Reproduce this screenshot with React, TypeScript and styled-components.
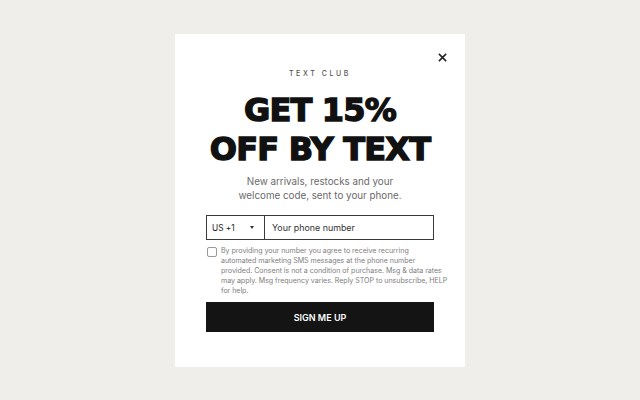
import styled, { createGlobalStyle } from 'styled-components'

const GlobalStyle = createGlobalStyle`
  html, body {
    margin: 0;
    padding: 0;
    background: #efeeea;
  }
  * {
    box-sizing: border-box;
  }
`

const Page = styled.div`
  width: 640px;
  height: 400px;
  display: flex;
  justify-content: center;
  padding-top: 34px;
  font-family: Inter, 'Liberation Sans', sans-serif;
`

const Modal = styled.div`
  position: relative;
  width: 290px;
  height: 333px;
  background: #ffffff;
  padding: 35px 31px 0;
  display: flex;
  flex-direction: column;
  align-items: center;
`

const Close = styled.button`
  position: absolute;
  top: 18px;
  right: 18px;
  width: 10px;
  height: 10px;
  padding: 0;
  border: 0;
  background: none;
  display: flex;
  align-items: center;
  justify-content: center;
  cursor: pointer;
`

const Eyebrow = styled.div`
  font-size: 7px;
  letter-spacing: 2.6px;
  color: #555;
  font-weight: 500;
  margin-left: 0;
`

const Heading = styled.h1`
  margin: 13px 0 0;
  font-family: 'DejaVu Sans', sans-serif;
  font-weight: 900;
  font-size: 32px;
  line-height: 39px;
  letter-spacing: -0.8px;
  color: #111;
  text-align: center;
  -webkit-text-stroke: 1.4px #111;
`

const Subtitle = styled.p`
  margin: 6px 0 0;
  font-size: 9.8px;
  line-height: 14px;
  color: #6a6a6a;
  text-align: center;
`

const PhoneRow = styled.div`
  margin-top: 12px;
  width: 100%;
  height: 25px;
  display: flex;
  border: 1px solid #3a3a3a;
`

const Country = styled.div`
  flex: none;
  width: 58px;
  border-right: 1px solid #3a3a3a;
  display: flex;
  align-items: center;
  justify-content: space-between;
  padding: 0 10px 0 5px;
  font-size: 8.3px;
  color: #222;
  white-space: nowrap;
`

const Caret = styled.span`
  width: 0;
  height: 0;
  border-left: 2.5px solid transparent;
  border-right: 2.5px solid transparent;
  border-top: 3px solid #333;
`

const PhoneInput = styled.input`
  flex: 1;
  min-width: 0;
  border: 0;
  outline: none;
  padding: 0 7px;
  font-family: inherit;
  font-size: 8.9px;
  color: #222;
  &::placeholder {
    color: #333;
  }
`

const Consent = styled.label`
  margin-top: 6px;
  width: 100%;
  display: flex;
  gap: 4px;
  align-items: flex-start;
`

const Box = styled.span`
  flex: none;
  width: 10px;
  height: 10px;
  margin-top: 1px;
  margin-left: 1px;
  border: 1px solid #999;
  border-radius: 2px;
`

const Fine = styled.span`
  font-size: 7.1px;
  line-height: 10px;
  letter-spacing: -0.04px;
  white-space: nowrap;
  color: #808080;
`

const Submit = styled.button`
  margin-top: 6px;
  width: 100%;
  height: 30px;
  border: 0;
  background: #141414;
  color: #fff;
  font-family: inherit;
  font-size: 9px;
  font-weight: 600;
  cursor: pointer;
`

export default function App() {
  return (
    <>
      <GlobalStyle />
      <Page>
        <Modal>
          <Close aria-label="Close">
            <svg width="9" height="9" viewBox="0 0 10 10">
              <path d="M1 1L9 9M9 1L1 9" stroke="#222" strokeWidth="1.7" />
            </svg>
          </Close>
          <Eyebrow>TEXT CLUB</Eyebrow>
          <Heading>
            GET 15%
            <br />
            OFF BY TEXT
          </Heading>
          <Subtitle>
            New arrivals, restocks and your
            <br />
            welcome code, sent to your phone.
          </Subtitle>
          <PhoneRow>
            <Country>
              US +1
              <Caret />
            </Country>
            <PhoneInput placeholder="Your phone number" />
          </PhoneRow>
          <Consent>
            <Box />
            <Fine>
              By providing your number you agree to receive recurring
              <br />
              automated marketing SMS messages at the phone number
              <br />
              provided. Consent is not a condition of purchase. Msg &amp; data rates
              <br />
              may apply. Msg frequency varies. Reply STOP to unsubscribe, HELP
              <br />
              for help.
            </Fine>
          </Consent>
          <Submit>SIGN ME UP</Submit>
        </Modal>
      </Page>
    </>
  )
}
